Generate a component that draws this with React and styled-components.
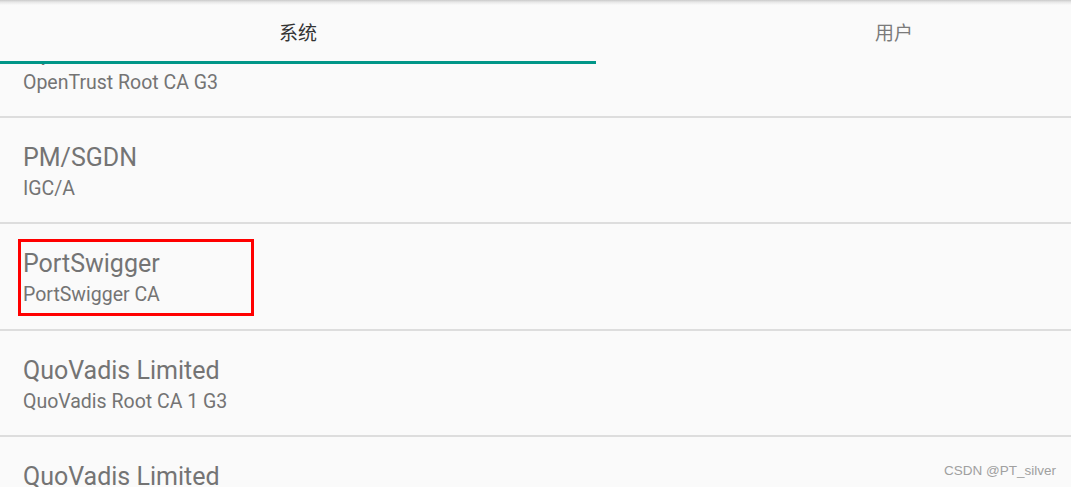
import styled, { createGlobalStyle } from 'styled-components';

const GlobalStyle = createGlobalStyle`
  html,
  body {
    margin: 0;
    padding: 0;
    background: #fafafa;
    overflow: hidden;
  }

  body {
    font-family: Roboto, "Noto Sans CJK SC", sans-serif;
  }
`;

const Screen = styled.div`
  position: relative;
  width: 1071px;
  height: 487px;
  display: flex;
  flex-direction: column;
  background: #fafafa;
  overflow: hidden;
`;

const TabBar = styled.div`
  display: flex;
  flex: none;
  height: 64px;
  background: linear-gradient(#c9c9c9 0, #e6e6e6 2px, #fafafa 5px);
`;

const Tab = styled.div`
  flex: none;
  width: 596px;
  display: flex;
  align-items: center;
  justify-content: center;
  padding-top: 2px;
  box-sizing: border-box;
  font-family: "Noto Sans CJK SC", Roboto, sans-serif;
  font-size: 19px;
  color: ${(p) => (p.active ? '#333333' : '#7a7a7a')};
  border-bottom: 3px solid ${(p) => (p.active ? '#009688' : 'transparent')};
`;

const Viewport = styled.div`
  flex: 1;
  overflow: hidden;
`;

const List = styled.div`
  margin-top: -52.4px;
`;

const Row = styled.div`
  height: 106.4px;
  box-sizing: border-box;
  border-bottom: 2px solid #dddddd;
  padding: 25px 0 0 23px;
  display: flex;
  align-items: flex-start;
`;

const TextBlock = styled.div`
  position: relative;
  display: flex;
  flex-direction: column;
  gap: 4px;

  ${(p) =>
    p.marked &&
    `
    &::after {
      content: '';
      position: absolute;
      left: -5px;
      top: -10px;
      width: 230px;
      height: 71px;
      border: 3px solid #ff0000;
    }
  `}
`;

const Title = styled.div`
  font-size: 25px;
  line-height: 30px;
  color: #747474;
`;

const Subtitle = styled.div`
  font-size: 19.5px;
  line-height: 24px;
  color: #747474;
`;

const Watermark = styled.div`
  position: absolute;
  right: 15px;
  bottom: 9px;
  font-family: "Liberation Sans", Arial, sans-serif;
  font-size: 13.5px;
  color: #a0a0a0;
`;

const certs = [
  { org: 'OpenTrust', name: 'OpenTrust Root CA G3' },
  { org: 'PM/SGDN', name: 'IGC/A' },
  { org: 'PortSwigger', name: 'PortSwigger CA', marked: true },
  { org: 'QuoVadis Limited', name: 'QuoVadis Root CA 1 G3' },
  { org: 'QuoVadis Limited', name: 'QuoVadis Root CA 2' },
];

export default function App() {
  return (
    <Screen>
      <GlobalStyle />
      <TabBar>
        <Tab active>系统</Tab>
        <Tab>用户</Tab>
      </TabBar>
      <Viewport>
        <List>
          {certs.map((c, i) => (
            <Row key={i}>
              <TextBlock marked={c.marked}>
                <Title>{c.org}</Title>
                <Subtitle>{c.name}</Subtitle>
              </TextBlock>
            </Row>
          ))}
        </List>
      </Viewport>
      <Watermark>CSDN @PT_silver</Watermark>
    </Screen>
  );
}
